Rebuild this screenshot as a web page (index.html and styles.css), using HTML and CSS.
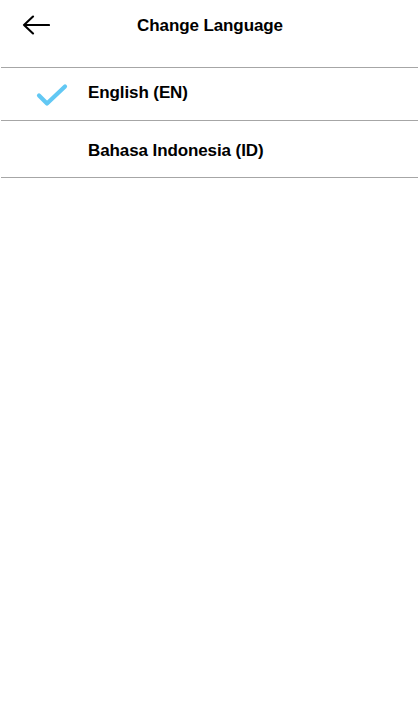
FILE: index.html
```html
<!DOCTYPE html>
<html>
<head>
<meta charset="utf-8">
<link rel="stylesheet" href="styles.css">
</head>
<body>
<div class="app">
  <header class="header">
    <button class="back" aria-label="Back">
      <svg width="28" height="20" viewBox="0 0 28 20"><path d="M27 10H2M11 1.5L2 10l9 8.5" fill="none" stroke="#000" stroke-width="2.1" stroke-linecap="round" stroke-linejoin="round"/></svg>
    </button>
    <h1 class="title">Change Language</h1>
  </header>
  <ul class="list">
    <li class="item item-first">
      <span class="check">
        <svg width="32" height="24" viewBox="0 0 32 24"><path d="M3 12.5l8 8L29 3.5" fill="none" stroke="#62c8f4" stroke-width="4.2" stroke-linecap="round" stroke-linejoin="round"/></svg>
      </span>
      <span class="label">English (EN)</span>
    </li>
    <li class="item item-second">
      <span class="check"></span>
      <span class="label">Bahasa Indonesia (ID)</span>
    </li>
  </ul>
</div>
</body>
</html>
```
FILE: styles.css
```css
* { box-sizing: border-box; }
html, body { margin: 0; padding: 0; background: #fff; }
body { font-family: "Liberation Sans", Arial, sans-serif; color: #000; }
.app { width: 420px; }
.header {
  position: relative;
  height: 67px;
  display: flex;
  align-items: flex-start;
  justify-content: center;
  padding-top: 15px;
}
.back {
  position: absolute;
  left: 22px;
  top: 15px;
  border: 0;
  background: none;
  padding: 0;
  line-height: 0;
}
.title {
  margin: 0;
  font-size: 17px;
  font-weight: bold;
  line-height: 22px;
  letter-spacing: -0.1px;
}
.list {
  list-style: none;
  margin: 0 2px 0 1px;
  padding: 0;
  border-top: 1px solid #a6a6a6;
}
.item {
  display: flex;
  align-items: center;
  border-bottom: 1px solid #a6a6a6;
}
.item-first { height: 53px; }
.item-second { height: 57px; }
.check {
  width: 87px;
  padding-left: 35px;
  line-height: 0;
  padding-top: 2px;
}
.label {
  font-size: 17px;
  font-weight: bold;
  letter-spacing: -0.1px;
}
.item-first .label { margin-bottom: 2px; }
.item-second .label { margin-top: 4px; }
```
